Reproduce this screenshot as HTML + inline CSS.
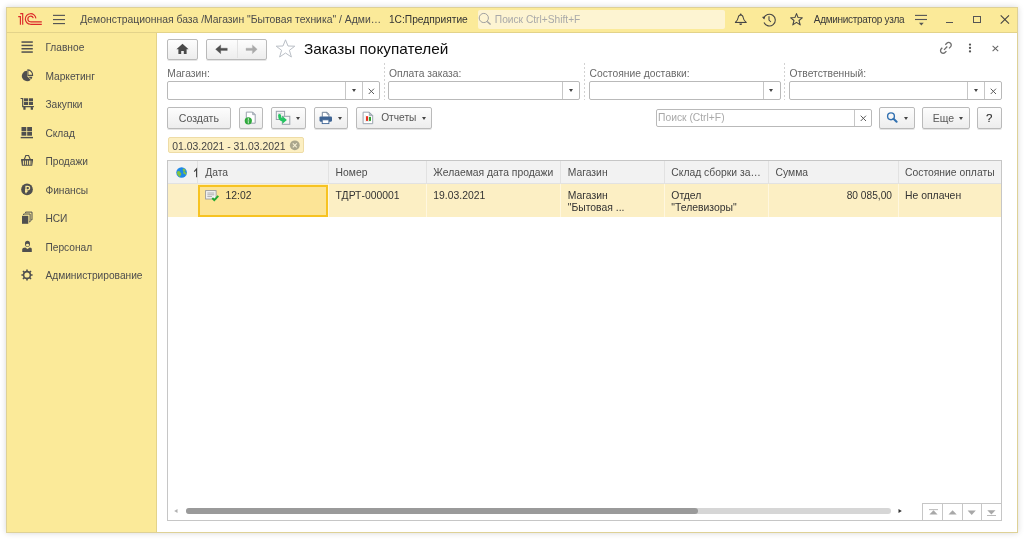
<!DOCTYPE html>
<html><head><meta charset="utf-8">
<style>
*{box-sizing:border-box;margin:0;padding:0}
html,body{width:1024px;height:539px;overflow:hidden;background:#fff;font-family:"Liberation Sans",sans-serif;font-size:10.2px;color:#4d4d4d;position:relative}
.a{position:absolute}
svg{position:absolute;overflow:visible}
.t{position:absolute;white-space:nowrap;line-height:12px;height:12px}
.btn{position:absolute;border:1px solid #bababa;border-radius:2px;background:linear-gradient(#fdfdfd,#ededed);box-shadow:0 1px 0 rgba(0,0,0,.10)}
.fld{position:absolute;border:1px solid #b9b9b9;border-radius:2px;background:#fff}
.vl{position:absolute;width:1px}
.hl{position:absolute;height:1px}
.tri{position:absolute;width:0;height:0;border-left:2.5px solid transparent;border-right:2.5px solid transparent;border-top:3px solid #444}
body>*{filter:blur(0.25px)}
.dots{position:absolute;width:1px;background:repeating-linear-gradient(#d2d2d2 0 2px,transparent 2px 4px)}
</style></head>
<body>
<!-- window frame -->
<div class="a" style="left:6px;top:7px;width:1012px;height:526px;border:1px solid #ded196;box-shadow:0 0 6px rgba(0,0,0,.16);background:#fff"></div>
<!-- title bar -->
<div class="a" style="left:7px;top:8px;width:1010px;height:25px;background:#fbea99;border-bottom:1px solid #e3d38a"></div>
<!-- sidebar -->
<div class="a" style="left:7px;top:33px;width:150px;height:499px;background:#fbea99;border-right:1px solid #e3d38a"></div>

<!-- 1C logo -->
<svg style="left:14px;top:10px" width="32" height="20" viewBox="0 0 32 20">
 <g fill="none" stroke="#dc2a2a" stroke-width="1.15">
  <path d="M4.2 6.6 H6.4 V14.8"/>
  <path d="M6.2 3.6 H8.7 V14.8"/>
  <path d="M21.9 8.4 A5.3 5.3 0 1 0 16.5 14.3 H27.8"/>
  <path d="M19.3 8.1 A2.8 2.8 0 1 0 16.5 11.8 H27.8"/>
 </g>
</svg>
<!-- hamburger -->
<svg style="left:53px;top:14px" width="12" height="10"><g fill="#555"><rect x="0" y="0.8" width="12" height="1.15"/><rect x="0" y="5" width="12" height="1.15"/><rect x="0" y="9" width="12" height="1.15"/></g></svg>
<div class="t" style="left:80.3px;top:13.8px;color:#4a4a4a;font-size:10.38px">Демонстрационная база /Магазин "Бытовая техника" / Адми…</div>
<div class="t" style="left:388.9px;top:13.5px;color:#333;font-size:10.23px">1С:Предприятие</div>
<div class="a" style="left:477.5px;top:9.5px;width:247.5px;height:19.3px;background:#fdf4d2;border-radius:2px"></div>
<svg style="left:478px;top:12px" width="14" height="14"><circle cx="5.8" cy="6" r="4.6" fill="none" stroke="#a0a0a0" stroke-width="1"/><path d="M9.2 9.4 L12.6 12.6" stroke="#a0a0a0" stroke-width="1.4"/></svg>
<div class="t" style="left:494.8px;top:13.5px;color:#a9a9a9;font-size:10.21px">Поиск Ctrl+Shift+F</div>

<!-- bell -->
<svg style="left:731px;top:10px" width="20" height="18" viewBox="0 0 20 18">
 <path d="M4.4 12.4 C6.2 10.6 7 9.5 7.3 7.2 C7.5 5.6 8.3 4.9 9.7 4.9 C11.1 4.9 11.9 5.6 12.1 7.2 C12.4 9.5 13.2 10.6 15.1 12.4 Z" fill="none" stroke="#454545" stroke-width="1.05" stroke-linejoin="round"/>
 <rect x="4.1" y="11.9" width="11.3" height="1.1" fill="#454545"/>
 <circle cx="9.7" cy="4.4" r="0.9" fill="#454545"/>
 <path d="M8.3 13.6 H11.1 A1.4 1.5 0 0 1 8.3 13.6 Z" fill="#454545"/>
</svg>
<!-- history -->
<svg style="left:762px;top:12px" width="15" height="15" viewBox="0 0 15 15">
 <path d="M1.8 6.3 A5.9 5.9 0 1 1 2 10.5" fill="none" stroke="#444" stroke-width="1.1"/>
 <path d="M0 5 L3.2 4.2 L2.3 7.6 Z" fill="#444"/>
 <path d="M7 4.2 V8 L8.9 10" fill="none" stroke="#444" stroke-width="1.05"/>
</svg>
<!-- star -->
<svg style="left:790px;top:13px" width="13" height="13" viewBox="0 0 13 13">
 <path d="M6.5 0.6 L8.1 4.6 L12.3 4.8 L9 7.5 L10.2 11.9 L6.5 9.4 L2.8 11.9 L4 7.5 L0.7 4.8 L4.9 4.6 Z" fill="none" stroke="#444" stroke-width="1.05" stroke-linejoin="round"/>
</svg>
<div class="t" style="left:813.8px;top:14.1px;color:#3a3a3a;font-size:10px;letter-spacing:-0.3px">Администратор узла</div>
<!-- filter/menu icon -->
<svg style="left:915px;top:14px" width="13" height="13"><g fill="#555"><rect x="0" y="0.85" width="12" height="1.1"/><rect x="0" y="4.95" width="12" height="1.1"/><path d="M4 8.8 H8.7 L6.35 11.6 Z"/></g></svg>
<!-- minimize -->
<div class="a" style="left:946px;top:22px;width:7px;height:1.1px;background:#555"></div>
<!-- maximize -->
<div class="a" style="left:973px;top:16px;width:8px;height:7px;border:1px solid #555"></div>
<!-- close -->
<svg style="left:1000px;top:15px" width="10" height="9" viewBox="0 0 10 9"><path d="M0.7 0.3 L9 8.6 M9 0.3 L0.7 8.6" stroke="#444" stroke-width="1.1"/></svg>

<!-- sidebar items -->
<div class="t" style="left:45.4px;top:42px;font-size:10.2px;color:#4d4d4d">Главное</div>
<div class="t" style="left:45.4px;top:70.6px;font-size:10.2px;color:#4d4d4d">Маркетинг</div>
<div class="t" style="left:45.4px;top:99.1px;font-size:10.2px;color:#4d4d4d">Закупки</div>
<div class="t" style="left:45.4px;top:127.6px;font-size:10.2px;color:#4d4d4d">Склад</div>
<div class="t" style="left:45.4px;top:156.2px;font-size:10.2px;color:#4d4d4d">Продажи</div>
<div class="t" style="left:45.4px;top:184.7px;font-size:10.2px;color:#4d4d4d">Финансы</div>
<div class="t" style="left:45.4px;top:213.3px;font-size:10.2px;color:#4d4d4d">НСИ</div>
<div class="t" style="left:45.4px;top:241.8px;font-size:10.2px;color:#4d4d4d">Персонал</div>
<div class="t" style="left:45.4px;top:270.4px;font-size:10.2px;color:#4d4d4d">Администрирование</div>

<!-- sidebar icons -->
<svg style="left:17px;top:38px" width="20" height="20" viewBox="0 0 20 20"><g fill="#4f4f4f"><rect x="4.5" y="3.3" width="11.3" height="1.5"/><rect x="4.5" y="6.7" width="11.3" height="1.5"/><rect x="4.5" y="10" width="11.3" height="1.5"/><rect x="4.5" y="13.3" width="11.3" height="1.5"/></g></svg>
<svg style="left:17px;top:66px" width="20" height="20" viewBox="0 0 20 20"><g fill="#4f4f4f">
 <path d="M10 10 V4.8 A5.2 5.2 0 1 0 13.7 13.7 Z"/>
 <path d="M11.3 10.8 H15.4 A5 5 0 0 1 14.3 13.2 Z"/>
 <path d="M10.9 3.9 A5.1 5.1 0 0 1 15.6 9.4 H10.9 Z" fill="none" stroke="#4f4f4f" stroke-width="1.1"/>
</g></svg>
<svg style="left:17px;top:94px" width="20" height="20" viewBox="0 0 20 20"><g fill="#4f4f4f">
 <path d="M3.6 4.5 H5.7 V12.6 H16.9" fill="none" stroke="#4f4f4f" stroke-width="1.2"/>
 <rect x="7" y="4.3" width="4.1" height="3"/><rect x="11.9" y="4.3" width="4.1" height="3"/>
 <rect x="7" y="8" width="4.1" height="3"/><rect x="11.9" y="8" width="4.1" height="3"/>
 <rect x="6.3" y="13" width="2.3" height="2.8" rx="0.6"/><rect x="13.7" y="13" width="2.3" height="2.8" rx="0.6"/>
</g></svg>
<svg style="left:17px;top:122px" width="20" height="20" viewBox="0 0 20 20"><g fill="#4f4f4f">
 <rect x="4.5" y="5" width="4.8" height="4"/><rect x="10.2" y="5" width="4.8" height="4"/>
 <rect x="4.5" y="9.7" width="4.8" height="4"/><rect x="10.2" y="9.7" width="4.8" height="4"/>
 <rect x="3.7" y="14.9" width="12.3" height="1.4"/>
</g></svg>
<svg style="left:17px;top:151px" width="20" height="20" viewBox="0 0 20 20"><g fill="#4f4f4f">
 <path d="M7.4 8.2 L8.8 4.5 H11.6 L13.2 8.2" fill="none" stroke="#4f4f4f" stroke-width="1.1"/>
 <path d="M4.1 8 H16 V9.3 L15.2 14.8 H4.9 L4.1 9.3 Z"/>
 <g fill="#fbea99"><rect x="5.9" y="9.6" width="1" height="4.2"/><rect x="7.9" y="9.6" width="1" height="4.2"/><rect x="9.9" y="9.6" width="1" height="4.2"/><rect x="11.9" y="9.6" width="1" height="4.2"/><rect x="13.5" y="9.6" width="0.8" height="4.2"/></g>
</g></svg>
<svg style="left:17px;top:179px" width="20" height="20" viewBox="0 0 20 20"><g>
 <circle cx="10" cy="10.4" r="5.85" fill="#4f4f4f"/>
 <path d="M9 14.3 V7.3 H10.9 A1.75 1.75 0 0 1 10.9 10.8 H8 M8 12.3 H10.6" fill="none" stroke="#fbea99" stroke-width="1.3"/>
</g></svg>
<svg style="left:17px;top:208px" width="20" height="20" viewBox="0 0 20 20"><g fill="#4f4f4f">
 <rect x="5" y="7.8" width="6.3" height="8"/>
 <path d="M6.6 7 V6 H13.1 V13.8 H12.1" fill="none" stroke="#4f4f4f" stroke-width="1"/>
 <path d="M8.6 5.1 V4.1 H15 V11.9 H14" fill="none" stroke="#4f4f4f" stroke-width="1"/>
</g></svg>
<svg style="left:17px;top:236px" width="20" height="20" viewBox="0 0 20 20"><g fill="#4f4f4f">
 <path d="M8 8 C7.8 5.5 9 4.8 10.5 4.8 C12 4.8 13.2 5.5 13 8 C13 10 12 10.8 10.5 10.8 C9 10.8 8 10 8 8 Z"/>
 <path d="M5.2 16 V13.5 C5.2 12.3 6.5 11.8 8.3 11.6 L10.5 13 L12.7 11.6 C14.5 11.8 14.8 12.3 14.8 13.5 V16 Z"/>
 <ellipse cx="10.5" cy="9" rx="1.6" ry="1.3" fill="#fbea99"/>
</g></svg>
<svg style="left:17px;top:265px" width="20" height="20" viewBox="0 0 20 20"><g>
 <circle cx="10" cy="10" r="3.4" fill="none" stroke="#4f4f4f" stroke-width="1.6"/>
 <g stroke="#4f4f4f" stroke-width="1.6">
  <path d="M10 4.4 V6.6 M10 13.4 V15.6 M4.4 10 H6.6 M13.4 10 H15.6 M6 6 L7.6 7.6 M12.4 12.4 L14 14 M14 6 L12.4 7.6 M7.6 12.4 L6 14"/>
 </g>
</g></svg>


<!-- ===== MAIN FORM ===== -->
<!-- home button -->
<div class="btn" style="left:167px;top:39px;width:30.5px;height:20.6px"></div>
<svg style="left:176px;top:43px" width="13" height="12" viewBox="0 0 13 12"><path d="M6.5 0.8 L12.6 6.3 H10.6 V11 H7.8 V7.9 H5.2 V11 H2.4 V6.3 H0.4 Z" fill="#4a4a4a"/></svg>
<!-- back/forward -->
<div class="btn" style="left:205.5px;top:39px;width:61.5px;height:20.6px"></div>
<div class="vl" style="left:237px;top:40px;height:18px;background:#e2e2e2"></div>
<svg style="left:214px;top:44px" width="14" height="11" viewBox="0 0 14 11"><path d="M1.6 5.3 L6.7 0.9 V4.15 H13.3 V6.45 H6.7 V9.7 Z" fill="#4f4f4f" stroke="#4f4f4f" stroke-width="0.3" stroke-linejoin="round"/></svg>
<svg style="left:244px;top:44px" width="14" height="11" viewBox="0 0 14 11"><path d="M13.2 5.3 L8.4 0.9 V4.15 H2 V6.45 H8.4 V9.7 Z" fill="#a9a9a9" stroke="#a9a9a9" stroke-width="0.3" stroke-linejoin="round"/></svg>
<!-- star outline -->
<svg style="left:275px;top:39px" width="21" height="19" viewBox="0 0 21 19"><path d="M10.5 0.8 L13 7 L19.8 7.2 L14.4 11.3 L16.4 18 L10.5 14 L4.6 18 L6.6 11.3 L1.2 7.2 L8 7 Z" fill="none" stroke="#b9bec5" stroke-width="1" stroke-linejoin="round"/></svg>
<div class="t" style="left:304px;top:40.1px;font-size:15.35px;line-height:18px;height:18px;color:#0d0d0d">Заказы покупателей</div>
<!-- link / kebab / close -->
<svg style="left:936px;top:38px" width="20" height="20" viewBox="0 0 20 20"><g fill="none" stroke="#6e6e6e" stroke-width="1.3"><path d="M9.3 6.7 L10.8 5.2 A2.6 2.6 0 0 1 14.5 8.9 L13 10.4"/><path d="M6.3 9.8 L5.3 10.8 A2.6 2.6 0 0 0 9 14.5 L10.4 13.1"/><path d="M8 11.9 L11.3 8.5"/></g></svg>
<svg style="left:968px;top:43px" width="4" height="10"><g fill="#555"><circle cx="2" cy="1.6" r="1.15"/><circle cx="2" cy="4.9" r="1.15"/><circle cx="2" cy="8.4" r="1.15"/></g></svg>
<svg style="left:992px;top:45px" width="7" height="7" viewBox="0 0 7 7"><path d="M0.6 0.8 L6.2 6.2 M6.2 0.8 L0.6 6.2" stroke="#666" stroke-width="1.05"/></svg>

<!-- labels -->
<div class="t" style="left:167.2px;top:67.5px;font-size:10.3px;color:#686868">Магазин:</div>
<div class="t" style="left:389px;top:67.5px;font-size:10.3px;color:#686868">Оплата заказа:</div>
<div class="t" style="left:589.5px;top:67.5px;font-size:10.3px;color:#686868">Состояние доставки:</div>
<div class="t" style="left:789.6px;top:67.5px;font-size:10.3px;color:#686868">Ответственный:</div>
<div class="dots" style="left:384px;top:63px;height:37px"></div>
<div class="dots" style="left:584px;top:63px;height:37px"></div>
<div class="dots" style="left:784px;top:63px;height:37px"></div>
<!-- fields -->
<div class="fld" style="left:167px;top:81px;width:213px;height:18.5px"></div>
<div class="vl" style="left:345px;top:82px;height:16.5px;background:#c6c6c6"></div>
<div class="vl" style="left:362px;top:82px;height:16.5px;background:#c6c6c6"></div>
<div class="tri" style="left:351.5px;top:89px"></div>
<svg style="left:367.5px;top:87.5px" width="7" height="7" viewBox="0 0 7 7"><path d="M0.7 0.7 L6 6 M6 0.7 L0.7 6" stroke="#5a5a5a" stroke-width="1"/></svg>

<div class="fld" style="left:388px;top:81px;width:191.5px;height:18.5px"></div>
<div class="vl" style="left:562px;top:82px;height:16.5px;background:#c6c6c6"></div>
<div class="tri" style="left:568.5px;top:89px"></div>

<div class="fld" style="left:589px;top:81px;width:191.5px;height:18.5px"></div>
<div class="vl" style="left:762.5px;top:82px;height:16.5px;background:#c6c6c6"></div>
<div class="tri" style="left:768.5px;top:89px"></div>

<div class="fld" style="left:789px;top:81px;width:212.5px;height:18.5px"></div>
<div class="vl" style="left:967.3px;top:82px;height:16.5px;background:#c6c6c6"></div>
<div class="vl" style="left:984.2px;top:82px;height:16.5px;background:#c6c6c6"></div>
<div class="tri" style="left:973.5px;top:89px"></div>
<svg style="left:989.5px;top:87.5px" width="7" height="7" viewBox="0 0 7 7"><path d="M0.7 0.7 L6 6 M6 0.7 L0.7 6" stroke="#5a5a5a" stroke-width="1"/></svg>

<!-- toolbar -->
<div class="btn" style="left:167.3px;top:107px;width:63.3px;height:22px"></div>
<div class="t" style="left:178.8px;top:111.8px;font-size:10.55px;color:#555">Создать</div>

<div class="btn" style="left:238.5px;top:107px;width:24.3px;height:22px"></div>
<svg style="left:242px;top:108px" width="20" height="20" viewBox="0 0 20 20">
 <path d="M4.3 4.1 H10.6 L13.2 6.7 V15.2 H4.3 Z" fill="#fff" stroke="#9aa3ae" stroke-width="1"/>
 <path d="M10.6 4.1 V6.7 H13.2 Z" fill="#c9ced4" stroke="#9aa3ae" stroke-width="0.8"/>
 <circle cx="6.3" cy="12.8" r="3.6" fill="#2ea83b"/>
 <path d="M6.3 10.2 V15.4" stroke="#e8f6e8" stroke-width="0.9"/><path d="M4.4 12.8 H8.2" stroke="#5cc064" stroke-width="0.7"/>
</svg>

<div class="btn" style="left:271px;top:107px;width:34.5px;height:22px"></div>
<svg style="left:272px;top:108px" width="24" height="20" viewBox="0 0 24 20">
 <rect x="4.3" y="3.3" width="8.3" height="8.2" fill="#f5f5f5" stroke="#98a1ac" stroke-width="1"/>
 <path d="M6 5.6 H10.5" stroke="#c8cdd3" stroke-width="0.8"/>
 <rect x="10.3" y="8.3" width="7.5" height="8" fill="#f5f5f5" stroke="#98a1ac" stroke-width="1"/>
 <path d="M7.6 7.4 Q7.5 11.9 11.2 11.9" stroke="#22c460" stroke-width="3" fill="none" stroke-linecap="round"/>
 <path d="M10.4 8.1 L14.9 11.9 L10.4 15.7 Z" fill="#22c460"/>
</svg>
<div class="tri" style="left:295.5px;top:117px"></div>

<div class="btn" style="left:313.5px;top:107px;width:34.3px;height:22px"></div>
<svg style="left:316px;top:108px" width="20" height="20" viewBox="0 0 20 20">
 <path d="M6.3 8.8 V4.3 H11 L12.9 6.2 V8.8" fill="#fff" stroke="#62758d" stroke-width="0.9"/>
 <path d="M11 4.3 V6.2 H12.9" fill="#c6ced8" stroke="#62758d" stroke-width="0.7"/>
 <rect x="3.5" y="8.5" width="12.5" height="5.2" rx="1.1" fill="#3e6494"/>
 <rect x="6.2" y="11.8" width="6.7" height="3.8" fill="#fff" stroke="#3e6494" stroke-width="0.9"/>
</svg>
<div class="tri" style="left:337.5px;top:117px"></div>

<div class="btn" style="left:356px;top:107px;width:76.3px;height:22px"></div>
<svg style="left:358px;top:108px" width="20" height="20" viewBox="0 0 20 20">
 <path d="M5.1 4.2 H11.3 L14.7 7.6 V15.7 H5.1 Z" fill="#fff" stroke="#9aa3ae" stroke-width="1"/>
 <path d="M11.3 4.2 V7.6 H14.7 Z" fill="#b4bbc3" stroke="#9aa3ae" stroke-width="0.8"/>
 <path d="M7.2 6.8 V13.3 H12.8" fill="none" stroke="#d6dbe0" stroke-width="0.6"/>
 <rect x="8" y="8.2" width="2.1" height="4.7" fill="#e8301f"/>
 <rect x="10.9" y="8.9" width="2.1" height="4" fill="#2f9e2f"/>
</svg>
<div class="t" style="left:381.2px;top:112.2px;font-size:10.2px;color:#555">Отчеты</div>
<div class="tri" style="left:422px;top:117px"></div>

<!-- search -->
<div class="fld" style="left:656px;top:109px;width:216px;height:18px"></div>
<div class="vl" style="left:854px;top:110px;height:16px;background:#c6c6c6"></div>
<div class="t" style="left:658px;top:112px;font-size:10.3px;color:#a9a9a9">Поиск (Ctrl+F)</div>
<svg style="left:859.5px;top:115px" width="7" height="7" viewBox="0 0 7 7"><path d="M0.7 0.7 L6 6 M6 0.7 L0.7 6" stroke="#5a5a5a" stroke-width="1"/></svg>

<div class="btn" style="left:879.3px;top:107px;width:35.3px;height:22px"></div>
<svg style="left:886px;top:111px" width="13" height="13" viewBox="0 0 13 13"><circle cx="5" cy="5.3" r="3.4" fill="none" stroke="#3170b0" stroke-width="1.4"/><path d="M7.5 7.8 L10.6 10.8" stroke="#3170b0" stroke-width="2" stroke-linecap="round"/></svg>
<div class="tri" style="left:904px;top:117px"></div>

<div class="btn" style="left:922px;top:107px;width:47.5px;height:22px"></div>
<div class="t" style="left:932.8px;top:112.4px;font-size:10.5px;color:#5a5a5a">Еще</div>
<div class="tri" style="left:958.5px;top:117px"></div>

<div class="btn" style="left:977.3px;top:107px;width:24.3px;height:22px"></div>
<div class="t" style="left:986px;top:111.6px;font-size:11.5px;color:#2a2a2a;-webkit-text-stroke:0.1px #2a2a2a">?</div>

<!-- date chip -->
<div class="a" style="left:167.5px;top:137.3px;width:136.7px;height:15.8px;background:#fcefc2;border:1px solid #eedca6;border-radius:2px"></div>
<div class="t" style="left:172.3px;top:141px;font-size:10.4px;color:#444">01.03.2021 - 31.03.2021</div>
<svg style="left:289px;top:140px" width="11" height="11" viewBox="0 0 11 11"><circle cx="5.8" cy="5.3" r="4.9" fill="#aaa68c"/><path d="M3.8 3.3 L7.8 7.3 M7.8 3.3 L3.8 7.3" stroke="#f7f0d4" stroke-width="1.1"/></svg>

<!-- ===== TABLE ===== -->
<div class="a" style="left:167px;top:160px;width:835px;height:361px;border:1px solid #c6c6c6;background:#fff"></div>
<div class="a" style="left:168px;top:161px;width:833px;height:22.5px;background:#f2f2f2;border-bottom:1px solid #e2e2e2"></div>
<div class="vl" style="left:197px;top:161px;height:22.5px;background:#e2e2e2"></div>
<div class="vl" style="left:328px;top:161px;height:22.5px;background:#e2e2e2"></div>
<div class="vl" style="left:426px;top:161px;height:22.5px;background:#e2e2e2"></div>
<div class="vl" style="left:560px;top:161px;height:22.5px;background:#e2e2e2"></div>
<div class="vl" style="left:664px;top:161px;height:22.5px;background:#e2e2e2"></div>
<div class="vl" style="left:768px;top:161px;height:22.5px;background:#e2e2e2"></div>
<div class="vl" style="left:898px;top:161px;height:22.5px;background:#e2e2e2"></div>
<!-- globe -->
<svg style="left:175.5px;top:166.8px" width="12" height="12" viewBox="0 0 12 12"><circle cx="5.6" cy="5.5" r="5.3" fill="#1e88e8"/><path d="M1.6 4.2 C2.6 3.6 3.8 4 4.2 5 C4.6 6 5.6 6.4 5.2 7.6 C4.8 8.4 4.2 9.2 3.8 10 C2.6 9.4 1.4 8 1 6.6 C0.9 5.6 1.1 4.8 1.6 4.2 Z M7.2 1.4 C8.4 1.6 9.4 2.4 10 3.2 C9.4 3.6 8.8 3.4 8.6 4.2 C8.4 5 9.4 5.4 10.6 5.6 C10.6 6.6 10.2 7.4 9.6 8 C9.2 7.4 8.8 6.8 8 6.8 C7.2 6.6 7 5.8 7.4 5.2 C7.8 4.6 7.2 3.8 6.8 3.2 C6.6 2.6 6.8 1.8 7.2 1.4 Z" fill="#86c43e"/></svg>
<svg style="left:193px;top:168px" width="6" height="10" viewBox="0 0 6 10"><path d="M3.6 9.2 V0.9 L1.2 3.6" fill="none" stroke="#3a3a3a" stroke-width="1.05"/></svg>
<div class="t" style="left:205.2px;top:166.5px;font-size:10.35px;color:#4d4d4d">Дата</div>
<div class="t" style="left:335.6px;top:166.5px;font-size:10.35px;color:#4d4d4d">Номер</div>
<div class="t" style="left:433.3px;top:166.5px;font-size:10.35px;color:#4d4d4d">Желаемая дата продажи</div>
<div class="t" style="left:567.7px;top:166.5px;font-size:10.35px;color:#4d4d4d">Магазин</div>
<div class="t" style="left:671.3px;top:166.5px;font-size:10.35px;color:#4d4d4d">Склад сборки за…</div>
<div class="t" style="left:775.5px;top:166.5px;font-size:10.35px;color:#4d4d4d">Сумма</div>
<div class="t" style="left:905px;top:166.5px;font-size:10.35px;color:#4d4d4d">Состояние оплаты</div>

<!-- row -->
<div class="a" style="left:168px;top:184px;width:833px;height:33px;background:#fcefc4"></div>
<div class="vl" style="left:328px;top:184px;height:33px;background:#fff7df"></div>
<div class="vl" style="left:426px;top:184px;height:33px;background:#fff7df"></div>
<div class="vl" style="left:560px;top:184px;height:33px;background:#fff7df"></div>
<div class="vl" style="left:664px;top:184px;height:33px;background:#fff7df"></div>
<div class="vl" style="left:768px;top:184px;height:33px;background:#fff7df"></div>
<div class="vl" style="left:898px;top:184px;height:33px;background:#fff7df"></div>
<div class="a" style="left:198.3px;top:184.5px;width:130px;height:32px;background:#fce496;border:2px solid #f7c322"></div>
<svg style="left:204.5px;top:190px" width="15" height="12" viewBox="0 0 15 12">
 <rect x="0.6" y="0.6" width="10.5" height="8.4" fill="#f4f4f4" stroke="#9a9a9a" stroke-width="0.9"/>
 <path d="M2.3 3 H9.3 M2.3 4.8 H9.3 M2.3 6.6 H7" stroke="#9a9a9a" stroke-width="0.8"/>
 <path d="M7.3 8 L9.3 10.2 L13.3 5.8" fill="none" stroke="#22a833" stroke-width="1.9"/>
</svg>
<div class="t" style="left:225.6px;top:189.5px;font-size:10.35px;color:#333">12:02</div>
<div class="t" style="left:335.6px;top:189.5px;font-size:10.4px;color:#333">ТДРТ-000001</div>
<div class="t" style="left:433.3px;top:189.5px;font-size:10.4px;color:#333">19.03.2021</div>
<div class="t" style="left:567.7px;top:189.5px;font-size:10.4px;color:#333;line-height:12.4px;height:auto">Магазин<br>"Бытовая ...</div>
<div class="t" style="left:671.3px;top:189.5px;font-size:10.4px;color:#333;line-height:12.4px;height:auto">Отдел<br>"Телевизоры"</div>
<div class="t" style="left:760px;top:189.5px;width:132px;text-align:right;font-size:10.2px;color:#333">80 085,00</div>
<div class="t" style="left:905px;top:189.5px;font-size:10.4px;color:#333">Не оплачен</div>

<!-- horizontal scrollbar -->
<svg style="left:173px;top:508px" width="6" height="6"><path d="M4.5 1 V5 L1.2 3 Z" fill="#b0b0b0"/></svg>
<div class="a" style="left:186px;top:508.3px;width:704.5px;height:5.8px;border-radius:3px;background:#d6d6d6"></div>
<div class="a" style="left:186px;top:508.3px;width:511.5px;height:5.8px;border-radius:3px;background:#9a9a9a"></div>
<svg style="left:897px;top:508px" width="6" height="6"><path d="M1.5 1 V5 L4.8 3 Z" fill="#333"/></svg>
<!-- nav buttons -->
<div class="a" style="left:922px;top:503px;width:80px;height:18px;border:1px solid #c6c6c6;background:#fff"></div>
<div class="vl" style="left:942px;top:504px;height:16px;background:#c6c6c6"></div>
<div class="vl" style="left:961.5px;top:504px;height:16px;background:#c6c6c6"></div>
<div class="vl" style="left:981px;top:504px;height:16px;background:#c6c6c6"></div>
<svg style="left:926px;top:506px" width="74" height="12" viewBox="0 0 74 12">
 <g fill="#a8a8a8">
  <rect x="3" y="3.3" width="9" height="0.8"/><path d="M7.5 4.3 L11.6 8.6 H3.4 Z"/>
  <path d="M26.6 4.3 L30.7 8.6 H22.5 Z"/>
  <path d="M41.6 4.6 H49.8 L45.7 8.9 Z"/>
  <path d="M61.3 4.3 H69.5 L65.4 8.6 Z"/><rect x="61" y="9.2" width="9" height="0.8"/>
 </g>
</svg>

</body></html>
